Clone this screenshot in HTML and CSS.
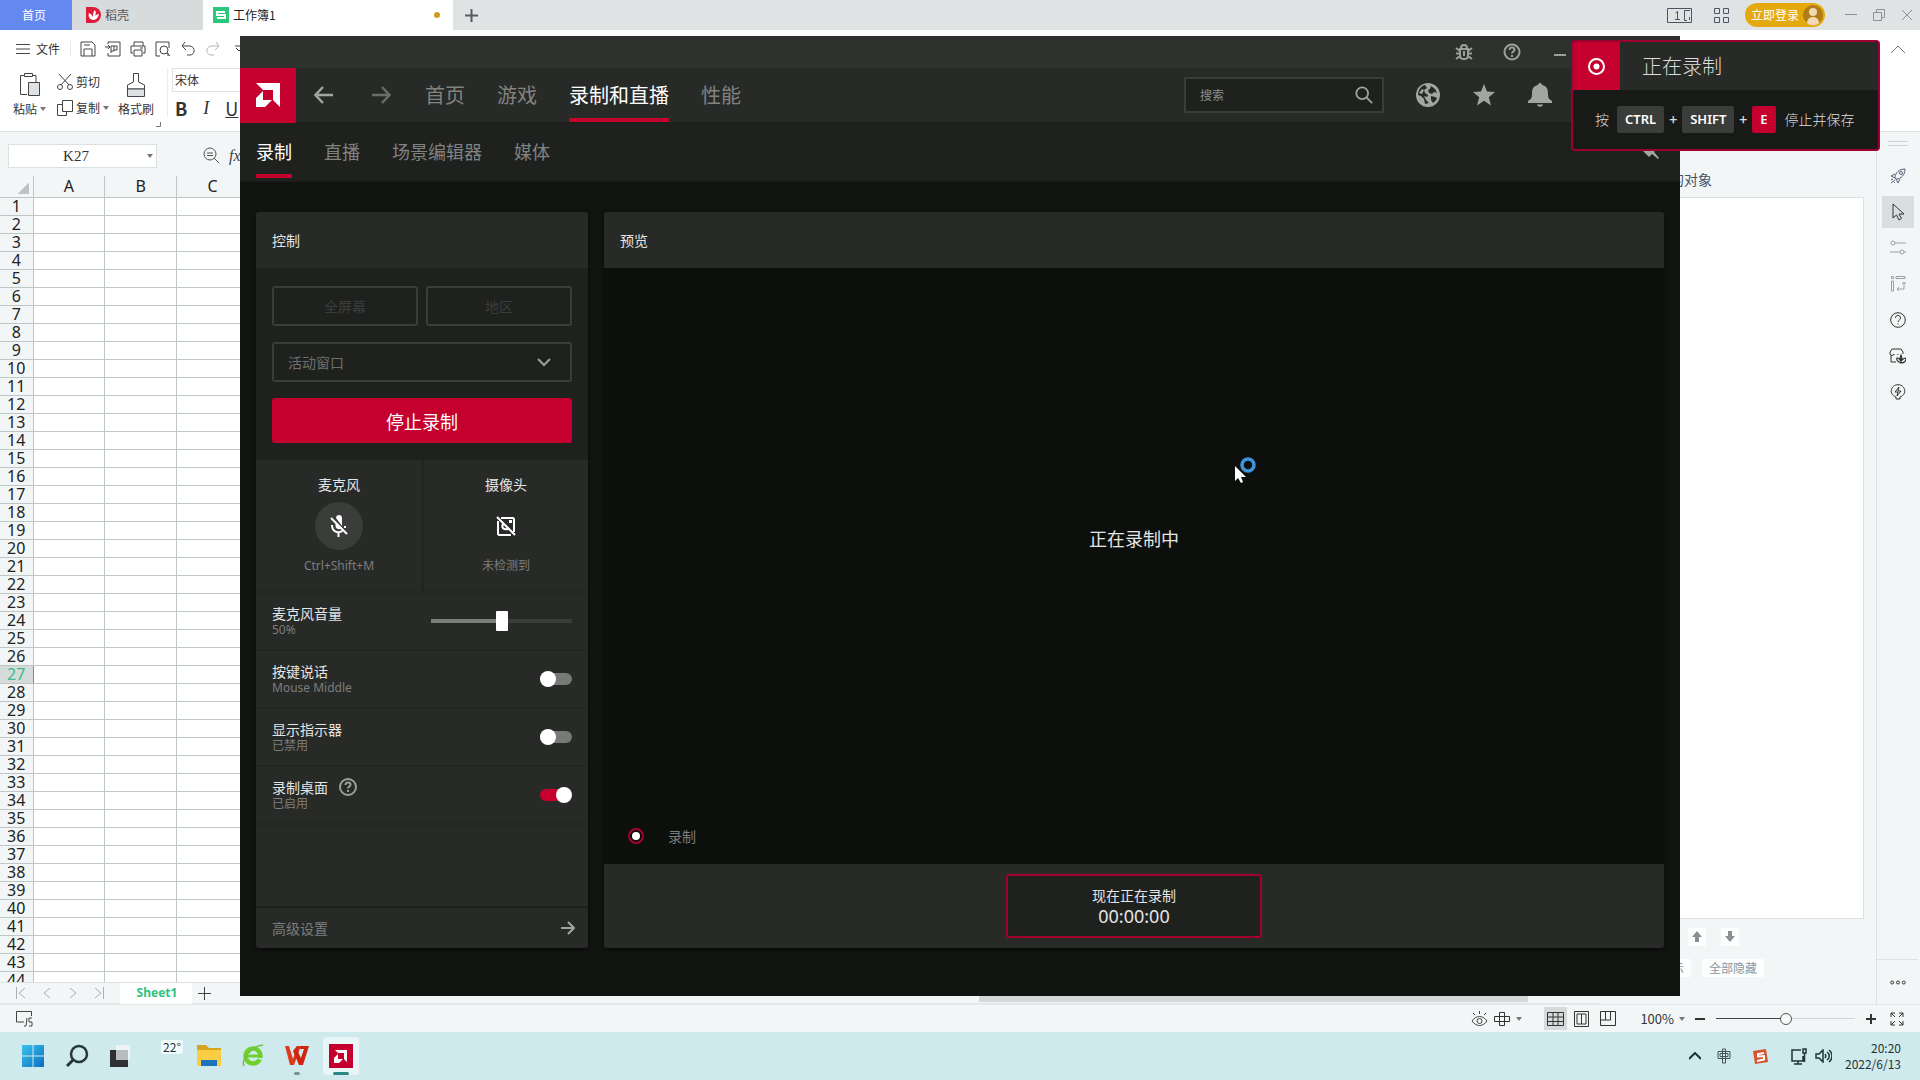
FILE: index.html
```html
<!DOCTYPE html>
<html lang="zh-CN">
<head>
<meta charset="utf-8">
<title>录制和直播</title>
<link rel="stylesheet" href="styles.css">
</head>
<body>
<div class="desktop">
  <div class="wps">
    <header class="tabbar">
      <button class="tab tab-home">首页</button>
      <button class="tab tab-docer"><svg width="15" height="16" viewBox="0 0 15 16"><path d="M0 0h7a8 8 0 0 1 0 16H0z" fill="#dd1c3c"/><path d="M7 13C3 12 2 9 3 6c2 1 3 2 4 4 0-3 0-5 2-7 1 2 1 4 0 6 1-1 2-2 4-2-1 4-3 6-6 6z" fill="#fff"/></svg>稻壳</button>
      <button class="tab tab-book"><svg width="16" height="16" viewBox="0 0 16 16"><rect width="16" height="16" fill="#2bc77a"/><path d="M12 5H4v3h8v3H4" fill="none" stroke="#fff" stroke-width="2"/></svg><span>工作簿1</span><i class="unsaved"></i></button>
      <button class="icon-btn new-tab" aria-label="新建"><svg width="13" height="13" viewBox="0 0 13 13"><path d="M6.500 0v13M0 6.500h13" stroke="#555d62" stroke-width="2"/></svg></button>
      <div class="tabbar-right">
        <svg width="25" height="15" viewBox="0 0 25 15" fill="none" stroke="#4b5563"><path d="M.5.5h24v14H.5zM8.500 5l2-1.500V11M8 11.500h5M23 2.500h-5.500v10H20M22.500 9v3"/></svg>
        <svg width="15" height="15" viewBox="0 0 15 15" fill="none" stroke="#4b5563"><path d="M.5.5h5v5h-5zM9.500.5h5v5h-5zM.5 9.500h5v5h-5zM9.500 9.500h5v5h-5z"/></svg>
        <button class="login">立即登录<svg width="20" height="20" viewBox="0 0 20 20"><circle cx="10" cy="10" r="10" fill="#b07c14"/><circle cx="10" cy="7" r="4" fill="#f0d9b4"/><path d="M4 18c0-8 12-8 12 0-3 3-9 3-12 0z" fill="#f0d9b4"/></svg></button>
        <svg class="win-min" width="12" height="12" viewBox="0 0 12 12" stroke="#8b9195"><path d="M0 5.500h12"/></svg>
        <svg class="win-max" width="12" height="12" viewBox="0 0 12 12" fill="none" stroke="#8b9195"><path d="M.5 3.500h8v8h-8zM3.500 3V.5h8v8H9"/></svg>
        <svg class="win-close" width="12" height="12" viewBox="0 0 12 12" stroke="#8b9195"><path d="M1 1l10 10M11 1L1 11"/></svg>
      </div>
    </header>

    <div class="ribbon">
      <div class="quick">
        <button class="file-menu"><svg width="14" height="10" viewBox="0 0 14 10" stroke="#444"><path d="M0 .5h14M0 5h14M0 9.500h14"/></svg>文件</button>
        <div class="quick-icons">
          <svg width="16" height="16" viewBox="0 0 16 16" fill="none" stroke="#444"><path d="M1 1h11l3 3v11H1zM4 15V8h8v7M4 4h6"/></svg>
          <svg width="16" height="16" viewBox="0 0 16 16" fill="none" stroke="#444"><path d="M3 3V1h12v14H3v-3M0 6h5M3 4l2 2-2 2M6 12V5h3v5H6M9 5h3v4H9"/></svg>
          <svg width="16" height="16" viewBox="0 0 16 16" fill="none" stroke="#444"><path d="M4 5V1h9v4M3 12H1V5h14v7h-2M4 9h8v6H4zM10 7h3"/></svg>
          <svg width="16" height="16" viewBox="0 0 16 16" fill="none" stroke="#444"><path d="M5 15H1V1h13v6M13 12v3"/><circle cx="9" cy="9" r="4"/><path d="M12 12l3 3"/></svg>
          <svg width="16" height="16" viewBox="0 0 16 16" fill="none" stroke="#444"><path d="M5 1L2 5l4 4M2 5h8c6 1 5 9 0 9H7"/></svg>
          <svg width="16" height="16" viewBox="0 0 16 16" fill="none" stroke="#b5b5b5"><path d="M11 1l3 4-4 4M14 5H6C0 6 1 14 6 14h3"/></svg>
          <svg width="16" height="16" viewBox="0 0 16 16" fill="none" stroke="#444"><path d="M5 5h8M6 7l3 3 3-3"/></svg>
        </div>
        <button class="icon-btn collapse" aria-label="收起"><svg width="14" height="8" viewBox="0 0 14 8" fill="none" stroke="#777"><path d="M0 8l7-7 7 7"/></svg></button>
      </div>
      <div class="tools">
        <button class="big-tool"><svg width="22" height="24" viewBox="0 0 22 24" fill="none" stroke="#444"><path d="M8 21.500H1.500v-19H5M14 2.500h3V9"/><path d="M5.500.5h8v3h-8z"/><path d="M9.500 9.500h11v13h-11z" fill="#dfe2e4"/></svg><span>粘贴<i class="caret"></i></span></button>
        <div class="tool-pair">
          <button><svg width="16" height="16" viewBox="0 0 16 16" fill="none" stroke="#444"><path d="M2 0l10 11M14 0L4 11"/><circle cx="3" cy="13" r="2.500"/><circle cx="13" cy="13" r="2.500"/></svg>剪切</button>
          <button><svg width="16" height="16" viewBox="0 0 16 16" fill="none" stroke="#444"><path d="M5.500.5h10v11h-10zM5 4.500H.5v11h9V12"/></svg>复制<i class="caret"></i></button>
        </div>
        <button class="big-tool painter"><svg width="18" height="24" viewBox="0 0 18 24" fill="none" stroke="#444"><path d="M6.500.5h5V9l6 3v4H.5v-4l6-3z"/><path d="M.5 16h17v7.500H.5z" fill="#dfe2e4"/></svg><span>格式刷</span></button>
        <svg class="launcher" width="5" height="5" viewBox="0 0 5 5" fill="none" stroke="#777"><path d="M4.500 0v4.500H0"/></svg>
        <div class="font-tools">
          <div class="font-name">宋体</div>
          <div class="font-style"><b>B</b><em>I</em><u>U</u></div>
        </div>
      </div>
    </div>

    <div class="main">
      <div class="sheet-area">
        <div class="formula">
          <label class="name-box"><input value="K27" aria-label="名称框"><i class="caret"></i></label>
          <svg width="17" height="17" viewBox="0 0 17 17" fill="none" stroke="#555"><circle cx="7" cy="7" r="6"/><path d="M11 11l5 5M4 6h6M4 8.500h6"/></svg>
          <span class="fx">fx</span>
        </div>
        <div class="grid-wrap">
          <table class="cells">
            <thead><tr><th class="corner"></th><th>A</th><th>B</th><th>C</th></tr></thead>
            <tbody id="rows"></tbody>
          </table>
        </div>
        <div class="sheet-tabs">
          <div class="sheet-nav">
            <svg width="10" height="12" viewBox="0 0 10 12"><path d="M.5 0v12M9 1L3 6l6 5"/></svg>
            <svg width="10" height="12" viewBox="0 0 10 12"><path d="M8 1L2 6l6 5"/></svg>
            <svg width="10" height="12" viewBox="0 0 10 12"><path d="M2 1l6 5-6 5"/></svg>
            <svg width="10" height="12" viewBox="0 0 10 12"><path d="M9.500 0v12M1 1l6 5-6 5"/></svg>
          </div>
          <button class="sheet-tab">Sheet1</button>
          <svg width="13" height="13" viewBox="0 0 13 13" stroke="#444"><path d="M6.500 0v13M0 6.500h13"/></svg>
          <div class="hscroll"></div>
        </div>
      </div>
      <aside class="pane">
        <h2>的对象</h2>
        <div class="pane-list"></div>
        <div class="pane-buttons">
          <button aria-label="上移"><svg width="10" height="12" viewBox="0 0 10 12"><path d="M5 0l5 6H7v5H3V6H0z" fill="#8a8f93"/></svg></button>
          <button aria-label="下移"><svg width="10" height="12" viewBox="0 0 10 12"><path d="M5 11l5-6H7V0H3v5H0z" fill="#8a8f93"/></svg></button>
        </div>
        <div class="pane-buttons pane-text"><button>示</button><button>全部隐藏</button></div>
      </aside>
      <nav class="rail">
        <i class="handle"></i>
        <button aria-label="推荐"><svg width="16" height="16" viewBox="0 0 16 16" fill="none" stroke="#59647a"><path d="M5 10C5 5 9 1 15 1c0 6-4 10-9 10zM5 6L1 8l4 2M10 11l-2 4-2-4M1 12l2-1M1 15l4-3M4 15l1-1"/><circle cx="11" cy="5" r="1.500"/></svg></button>
        <button class="on" aria-label="选择"><svg width="16" height="18" viewBox="0 0 16 18" fill="none" stroke="#333"><path d="M3 1v14l3.500-3 2.500 5 2.500-1.500L9 11h5z"/></svg></button>
        <button aria-label="属性"><svg width="16" height="16" viewBox="0 0 16 16" fill="none" stroke="#9aa0a4"><circle cx="3" cy="3" r="2"/><circle cx="12" cy="12" r="2"/><path d="M5 3h11M0 12h10M14 12h2"/></svg></button>
        <button aria-label="布局"><svg width="16" height="16" viewBox="0 0 16 16" fill="none" stroke="#9aa0a4"><path d="M1.500.5h2v2h-2zM6 .5h9v2H6zM1.500 5h2v10h-2zM14 7v6H7M12 8l2-2 2 2M9 11l-2 2 2 2"/></svg></button>
        <button aria-label="帮助"><svg width="16" height="16" viewBox="0 0 16 16" fill="none" stroke="#333"><circle cx="8" cy="8" r="7.300"/><path d="M5.500 6c0-3.500 5-3.500 5 0 0 2-2.500 2-2.500 4M8 11.500v1"/></svg></button>
        <button aria-label="商城"><svg width="17" height="16" viewBox="0 0 17 16" fill="none" stroke="#333"><path d="M2 7v7h5M3 1h9l2 3v2M3 1L1 4v2c1 2 3 2 4 0M5 6v1M9 6v1"/><path d="M12 15c-3-1-5-3-4-5 2 0 2 1 3 2 0-2 0-3 1-5 1 2 1 3 1 5 1-1 2-2 4-2 0 3-2 5-5 5zM12 10v5" stroke-width="1.200"/></svg></button>
        <button aria-label="提示"><svg width="16" height="16" viewBox="0 0 16 16" fill="none" stroke="#333"><path d="M6 13C-2 10 1 .7 8 .7S18 10 10 13v2H6zM9 3L5 8h3l-1 4 4-5H8z"/></svg></button>
        <button class="more" aria-label="更多"><svg width="16" height="5" viewBox="0 0 16 5" fill="none" stroke="#333"><circle cx="2.200" cy="2.500" r="1.500"/><circle cx="8" cy="2.500" r="1.500"/><circle cx="13.800" cy="2.500" r="1.500"/></svg></button>
      </nav>
    </div>

    <footer class="status">
      <svg width="17" height="16" viewBox="0 0 17 16" fill="none" stroke="#444"><path d="M8 11H.5V.5h15V5M10 15l1-8M16 7h-3v4h3v4h-3M8 15h2"/></svg>
      <div class="status-right">
        <svg width="17" height="16" viewBox="0 0 17 16" fill="none" stroke="#444"><path d="M1 10c4-6 11-6 15 0-4 6-11 6-15 0zM8.500 0v3M2 2l2 2M15 2l-2 2"/><circle cx="8.500" cy="10" r="2.500"/></svg>
        <svg class="cross" width="16" height="16" viewBox="0 0 16 16" fill="none" stroke="#333"><path d="M5.500 1.500h5v13h-5zM.5 5.500h15v5H.5z"/></svg>
        <i class="caret"></i>
        <span class="view on"><svg width="17" height="14" viewBox="0 0 17 14" fill="none" stroke="#333"><path d="M.5.5h16v13H.5zM.5 5h16M.5 9.500h16M6 .5v13M11 .5v13"/></svg></span>
        <span class="view"><svg width="15" height="16" viewBox="0 0 15 16" fill="none" stroke="#333"><path d="M.5.5h14v15H.5zM3 3h9v10H3zM7.500 3v10"/></svg></span>
        <span class="view"><svg width="16" height="15" viewBox="0 0 16 15" fill="none" stroke="#333"><path d="M.5.500h15v14H.5zM.5 9h10V.5M5.500 1v8"/></svg></span>
        <span class="zoom-value">100%</span><i class="caret"></i>
        <svg class="zoom-out" width="10" height="10" viewBox="0 0 10 10" stroke="#333" stroke-width="2"><path d="M0 5h10"/></svg>
        <input class="zoom-slider" type="range" aria-label="缩放" value="50">
        <svg class="zoom-in" width="10" height="10" viewBox="0 0 10 10" stroke="#333" stroke-width="2"><path d="M0 5h10M5 0v10"/></svg>
        <svg width="14" height="14" viewBox="0 0 14 14" fill="none" stroke="#333"><path d="M1 5V1h4M9 1h4v4M13 9v4H9M5 13H1V9M1 1l4 4M13 1L9 5M13 13L9 9M1 13l4-4"/></svg>
      </div>
    </footer>
  </div>

  <footer class="taskbar">
    <div class="apps">
      <button aria-label="开始"><svg width="24" height="24" viewBox="0 0 24 24"><defs><linearGradient id="w" x2="1" y2="1"><stop stop-color="#3cc3ee"/><stop offset="1" stop-color="#0a6fc0"/></linearGradient></defs><path d="M1 1h10.500v10.500H1zM12.500 1H23v10.500H12.500zM1 12.500h10.500V23H1zM12.500 12.500H23V23H12.500z" fill="url(#w)"/></svg></button>
      <button aria-label="搜索"><svg width="24" height="24" viewBox="0 0 24 24" fill="none" stroke="#28363c"><circle cx="14" cy="10" r="8" stroke-width="2.500"/><path d="M8 16l-6 6" stroke-width="3"/></svg></button>
      <button aria-label="任务视图"><svg width="24" height="24" viewBox="0 0 24 24"><path d="M1 6h18v17H1z" fill="#2e3133"/><path d="M7 1h14v15H7z" fill="#eef4f4"/><path d="M7 6h12v10H7z" fill="#b9bcbd"/></svg></button>
      <button class="weather">22°</button>
      <button aria-label="文件"><svg width="26" height="24" viewBox="0 0 26 24"><path d="M1 1h9l3 3h12v18H1z" fill="#d9a520"/><path d="M1 6h24v16H1z" fill="#fbcd45"/><path d="M5 16h16v6H5z" fill="#1d72bd"/></svg></button>
      <button aria-label="浏览器"><svg width="24" height="24" viewBox="0 0 24 24" fill="none"><circle cx="12" cy="12" r="7.500" stroke="#6fd22c" stroke-width="4.500"/><path d="M6 12h14" stroke="#6fd22c" stroke-width="3"/><path d="M15 14h8v3z" fill="#cfeaec"/><path d="M3 22C0 16 10 2 22 1" stroke="#74bd4a" stroke-width="1.500"/></svg></button>
      <button class="running" aria-label="WPS"><svg width="26" height="22" viewBox="0 0 26 22"><path d="M1 1h4l4 13 4-13h4L10 20H6z" fill="#e03a1d"/><path d="M16 1h9l-6 19h-4L9 6l4-5h2l-2 4 4 8 3-9h-4z" fill="#cf2411"/></svg></button>
      <button class="running active" aria-label="AMD"><svg width="24" height="24" viewBox="0 0 24 24"><path d="M0 0h24v24H0z" fill="#c5002f"/><path d="M6 6h12v12l-3-3V9H9zM5 14l4-4v5h5l-4 4H5z" fill="#fff"/></svg></button>
    </div>
    <div class="tray">
      <svg width="12" height="8" viewBox="0 0 12 8" fill="none" stroke="#1f3338" stroke-width="2"><path d="M0 7l6-6 6 6"/></svg>
      <svg class="ime" width="14" height="16" viewBox="0 0 14 16" fill="none" stroke="#44555a"><path d="M1 3.500h12v7H1zM3 5.500h8v3H3zM5.500 1h3v14h-3z"/></svg>
      <svg class="sogou" width="17" height="17" viewBox="0 0 17 17"><path d="M1 3l13-2 2 13-13 2z" fill="#d9532f"/><path d="M12 5L6 6v2.500l6-.5v3.500L5 13" fill="none" stroke="#fff" stroke-width="2"/></svg>
      <svg class="net" width="18" height="17" viewBox="0 0 18 17" fill="none" stroke="#1f3338" stroke-width="1.500"><path d="M11 2H2v11h11V8M4 16h8M8 13v3M13 1h3v4h-3zM14.500 5v9"/></svg>
      <svg width="17" height="14" viewBox="0 0 17 14" fill="none" stroke="#1f3338" stroke-width="1.500"><path d="M1 5h3l4-4v12L4 9H1zM10 5c1 1 1 3 0 4M12 3c3 2 3 6 0 8M14 1c4 3 4 9 0 12"/></svg>
      <div class="clock"><span>20:20</span><span>2022/6/13</span></div>
    </div>
  </footer>

  <section class="amd">
    <div class="amd-title">
      <svg width="18" height="18" viewBox="0 0 18 18" fill="none" stroke="#9c9e9c" stroke-width="2"><path d="M5 6h8v7c0 4-8 4-8 0zM6 5c0-4 6-4 6 0M1 5l4 3M17 5l-4 3M1 10.500h4M13 10.500h4M1 16l4-3M17 16l-4-3M9 8v5"/></svg>
      <svg width="18" height="18" viewBox="0 0 18 18" fill="none" stroke="#9c9e9c" stroke-width="2"><circle cx="9" cy="9" r="7.500"/><path d="M6.500 7c0-3.500 5-3 5-.3C11.500 8.500 9 8.500 9 10.500M9 12v2"/></svg>
      <svg width="18" height="18" viewBox="0 0 18 18" stroke="#9c9e9c" stroke-width="2"><path d="M3 12h12"/></svg>
    </div>
    <div class="amd-nav">
      <div class="logo"><svg width="24" height="24" viewBox="0 0 24 24"><path d="M0 0h24v24l-7-7V7H7zM0 15l7-7v9h9l-7 7H0z" fill="#fff"/></svg></div>
      <button class="icon-btn arrow" aria-label="后退"><svg width="20" height="18" viewBox="0 0 20 18" fill="none" stroke="#a3a5a3" stroke-width="2.500"><path d="M19 9H2M9 1L1.500 9 9 17"/></svg></button>
      <button class="icon-btn arrow" aria-label="前进"><svg width="20" height="18" viewBox="0 0 20 18" fill="none" stroke="#6b6d6b" stroke-width="2.500"><path d="M1 9h17M11 1l7.500 8L11 17"/></svg></button>
      <nav class="links">
        <a href="#">首页</a><a href="#">游戏</a><a href="#" class="current">录制和直播</a><a href="#">性能</a>
      </nav>
      <label class="search"><input placeholder="搜索" aria-label="搜索"><svg width="18" height="18" viewBox="0 0 20 20" fill="none" stroke="#a0a2a0" stroke-width="2"><circle cx="8" cy="8" r="6.500"/><path d="M13 13l6 6"/></svg></label>
      <div class="nav-icons">
        <svg width="24" height="24" viewBox="0 0 24 24"><circle cx="12" cy="12" r="12" fill="#a3a5a3"/><path d="M9 2l2 3-3 2 1 3 3 2-1 2-3-1 2 4 3 3-4 1-1-5-3-3-3-1c0-5 3-9 7-10zM15 3l4 3 2 4-3-1-2 2-3-1-1-3 2-1zM15 13l4 1 2 1c-1 3-3 4-4 5l-2-3z" fill="#282a28"/><path d="M6 6l2 1-2 4-3-1z" fill="#a3a5a3"/></svg>
        <svg width="24" height="24" viewBox="0 0 24 24"><path d="M12 1l3 7.500 8 .5-6.200 5.200 2.200 8.300-7-4.700-7 4.700 2.200-8.300L1 9l8-.5z" fill="#a3a5a3"/></svg>
        <svg width="24" height="24" viewBox="0 0 24 24"><path d="M12 0c1.500 0 2 1 2 2 5 1 6 4 6 9 0 4 1 5 4 7v2H0v-2c3-2 4-3 4-7 0-5 1-8 6-9 0-1 .5-2 2-2zM9 21.500h6c-.5 3-5.500 3-6 0z" fill="#a3a5a3"/></svg>
      </div>
    </div>
    <nav class="links amd-subnav">
      <a href="#" class="current">录制</a><a href="#">直播</a><a href="#">场景编辑器</a><a href="#">媒体</a>
      <svg class="pin" width="18" height="18" viewBox="0 0 18 18"><path d="M1 9h9l2-6 3 1-3 6 5 6-1 1-6-5-3 3z" fill="#a3a5a3"/></svg>
    </nav>
    <div class="amd-body">
      <div class="panel controls">
        <h2>控制</h2>
        <div class="targets">
          <div class="pair"><button class="outline" disabled>全屏幕</button><button class="outline" disabled>地区</button></div>
          <div class="select-wrap"><select aria-label="窗口"><option>活动窗口</option></select><svg width="14" height="9" viewBox="0 0 14 9" fill="none" stroke="#9c9e9c" stroke-width="2"><path d="M1 1l6 6 6-6"/></svg></div>
          <button class="stop">停止录制</button>
        </div>
        <div class="devices">
          <div class="device"><span>麦克风</span><button class="round" aria-label="麦克风"><svg width="24" height="24" viewBox="0 0 24 24" fill="none" stroke="#fff" stroke-width="2"><path d="M5 11c0 9 9 8 11 5M18 12v2M11.500 18v5"/><path d="M9 4c0-4 6-4 6 0v8z" fill="#fff" stroke="none"/><path d="M8.500 8l6 6.500c-3 2-6 0-6-3z" fill="#fff" stroke="none"/><path d="M4 4l16 16"/></svg></button><small>Ctrl+Shift+M</small></div>
          <div class="device"><span>摄像头</span><button class="round plain" aria-label="摄像头"><svg width="24" height="24" viewBox="0 0 24 24" fill="none" stroke="#fff" stroke-width="2"><path d="M7 4h12l1 1v13M17 21H5l-1-1V7M3 3l18 18M9 10c-2 4 1 6 5 5"/><path d="M15 6h3v3h-3z" fill="#fff" stroke="none"/></svg></button><small>未检测到</small></div>
        </div>
        <div class="setting"><label for="vol">麦克风音量<small>50%</small></label><input id="vol" class="volume" type="range" value="50"></div>
        <div class="setting"><label for="ptt">按键说话<small>Mouse Middle</small></label><input id="ptt" class="switch" type="checkbox"></div>
        <div class="setting"><label for="ind">显示指示器<small>已禁用</small></label><input id="ind" class="switch" type="checkbox"></div>
        <div class="setting"><label for="desk"><span class="with-help">录制桌面<svg width="18" height="18" viewBox="0 0 18 18" fill="none" stroke="#9c9e9c" stroke-width="2"><circle cx="9" cy="9" r="8"/><path d="M6.500 7c0-3.500 5-3 5-.3C11.500 8.500 9 8.500 9 10.500M9 12v2"/></svg></span><small>已启用</small></label><input id="desk" class="switch" type="checkbox" checked></div>
        <a href="#" class="advanced">高级设置<svg width="14" height="14" viewBox="0 0 14 14" fill="none" stroke="#a3a5a3" stroke-width="2"><path d="M0 7h12M7 1l6 6-6 6"/></svg></a>
      </div>
      <div class="panel preview">
        <h2>预览</h2>
        <div class="stage">
          <p class="message">正在录制中</p>
          <div class="rec-state"><svg width="16" height="16" viewBox="0 0 16 16"><circle cx="8" cy="8" r="7" fill="none" stroke="#a30030" stroke-width="2"/><circle cx="8" cy="8" r="4" fill="#fff"/></svg>录制</div>
        </div>
        <div class="preview-foot"><div class="timer"><span>现在正在录制</span><strong>00:00:00</strong></div></div>
      </div>
    </div>
  </section>

  <aside class="toast">
    <div class="toast-head">
      <div class="toast-icon"><svg width="17" height="17" viewBox="0 0 17 17"><circle cx="8.500" cy="8.500" r="7.500" fill="none" stroke="#fff" stroke-width="2"/><circle cx="8.500" cy="8.500" r="3" fill="#fff"/></svg></div>
      <span>正在录制</span>
    </div>
    <div class="toast-body"><span>按</span><kbd>CTRL</kbd><b>+</b><kbd>SHIFT</kbd><b>+</b><kbd class="hot">E</kbd><span class="tail">停止并保存</span></div>
  </aside>

  <svg class="pointer" width="24" height="28" viewBox="0 0 24 28"><circle cx="14" cy="8" r="6" fill="none" stroke="#3e95dc" stroke-width="3.500"/><path d="M1 9v15l3-3 3 5 2-1-2-5h5z" fill="#fff"/></svg>
</div>
<script src="rows.js"></script>
</body>
</html>
```
FILE: rows.js
```js
const body = document.getElementById('rows');
for (let n = 1; n <= 44; n++) {
  const row = body.insertRow();
  const head = document.createElement('th');
  head.textContent = n;
  if (n === 27) head.className = 'selected';
  row.append(head);
  for (let c = 0; c < 3; c++) row.insertCell();
}
```
FILE: styles.css
```css
* { box-sizing: border-box; }
body { margin: 0; font: 12px/16px "Noto Sans CJK SC", "Noto Sans", sans-serif; color: #333; }
button, input, select { font: inherit; color: inherit; border: 0; padding: 0; margin: 0; background: none; }
h2, p { margin: 0; font-weight: 400; }
svg { display: block; flex: none; }
a { color: inherit; text-decoration: none; }
small { font: 12px/16px "Noto Sans", "Noto Sans CJK SC", sans-serif; }

.desktop { position: relative; height: 100vh; display: flex; flex-direction: column; overflow: hidden; }
.wps { flex: 1; min-height: 0; display: flex; flex-direction: column; background: #f3f6f6; }
.caret { display: inline-block; border: 3px solid transparent; border-top: 4px solid #777; border-bottom: 0; }
.icon-btn { display: flex; align-items: center; justify-content: center; }

.tabbar { height: 30px; display: flex; background: #dfe3e3; }
.tab { display: flex; align-items: center; gap: 4px; }
.tab-home { width: 72px; padding-left: 22px; background: #6389f0; color: #fff; }
.tab-docer { width: 131px; padding-left: 14px; background: #d8dbdb; color: #555; }
.tab-book { width: 250px; padding: 0 13px 0 10px; background: #fff; color: #222; }
.unsaved { width: 6px; height: 6px; margin-left: auto; border-radius: 50%; background: #d29b1c; }
.new-tab { width: 36px; }
.tabbar-right { margin-left: auto; padding-right: 7px; display: flex; align-items: center; gap: 16px; }
.tabbar-right > svg:nth-child(2) { margin-left: 6px; }
.login { height: 24px; padding: 0 2px 0 6px; display: flex; align-items: center; gap: 4px; border-radius: 12px; background: #e5a910; color: #fff; }
.win-min { margin-left: 4px; }

.ribbon { height: 102px; background: #fff; border-bottom: 1px solid #dbe0e0; }
.quick { height: 38px; display: flex; align-items: center; padding: 0 15px 0 16px; }
.file-menu { display: flex; align-items: center; gap: 6px; padding-right: 10px; border-right: 1px solid #e5e8e8; }
.quick-icons { display: flex; gap: 9px; margin-left: 9px; }
.collapse { margin-left: auto; }
.tools { display: flex; align-items: flex-start; padding-left: 13px; }
.big-tool { display: flex; flex-direction: column; align-items: center; gap: 4px; padding-top: 5px; }
.big-tool span, .tool-pair button { display: flex; align-items: center; gap: 3px; }
.tool-pair { display: grid; gap: 10px; margin: 6px 0 0 11px; }
.painter { margin-left: 9px; padding-right: 2px; height: 60px; }
.launcher { margin-top: 54px; }
.font-tools { margin-left: 6px; padding-left: 4px; border-left: 1px solid #eceeee; }
.font-name { width: 90px; height: 24px; padding: 3px 2px; border: 1px solid #dfe2e2; }
.font-style { display: flex; gap: 16px; margin: 7px 0 0 3px; font-size: 18px; line-height: 18px; }
.font-style em { font-family: "Liberation Serif", serif; }

.main { flex: 1; min-height: 0; display: flex; }
.sheet-area { flex: 1; min-width: 0; display: flex; flex-direction: column; }
.formula { height: 44px; display: flex; align-items: center; padding: 3px 0 0 8px; }
.name-box { display: flex; align-items: center; width: 149px; height: 24px; border: 1px solid #dbe0e0; background: #fff; padding-right: 3px; margin-right: 46px; }
.name-box input { flex: 1; min-width: 0; padding-right: 4px; text-align: center; font: 15px/20px "Liberation Serif", serif; }
.fx { margin-left: 9px; font: italic 16px/20px "Liberation Serif", serif; color: #444; }
.grid-wrap { flex: 1; min-height: 0; overflow: hidden; background: #fff; }
.cells { width: 249px; table-layout: fixed; border-collapse: collapse; font: 16px/17px "Noto Sans", sans-serif; color: #222; }
.cells th, .cells td { height: 18px; padding: 0; border: solid #bfc7c6; border-width: 0 1px 1px 0; font-weight: 400; }
.cells th { background: #f3f6f6; }
.cells thead th { height: 21px; line-height: 20px; }
.cells .corner { width: 33px; background: linear-gradient(135deg, transparent 50%, #bfc3c3 50%) 17px 6px / 12px 12px no-repeat #f3f6f6; }
.cells .selected { background: #d5dada; color: #3dba86; border-right-color: #2fb67c; }
.sheet-tabs { height: 22px; display: flex; align-items: center; border-top: 1px solid #dbe0e0; border-bottom: 1px solid #e2e5e5; }
.sheet-nav { width: 120px; padding-left: 16px; display: flex; gap: 16px; }
.sheet-nav svg { fill: none; stroke: #aaafb2; }
.sheet-tab { width: 72px; height: 21px; margin-right: 6px; padding-left: 2px; background: #fff; color: #2fc27c; font: bold 12px/16px "Noto Sans", sans-serif; }
.hscroll { flex: 1; margin: 12px 72px 0 768px; height: 6px; background: #d5d8d8; }

.pane { width: 277px; display: flex; flex-direction: column; border-right: 1px solid #dde2e2; padding: 37px 12px 27px 60px; color: #44526a; }
.pane h2 { font-size: 14px; line-height: 20px; padding-left: 10px; }
.pane-list { flex: 1; margin-top: 8px; background: #fff; border: 1px solid #dbe0e0; }
.pane-buttons { display: flex; gap: 15px; margin: 9px 0 0 28px; }
.pane-buttons button { width: 18px; height: 18px; display: flex; align-items: center; justify-content: center; background: #fdfefe; }
.pane-text { margin: 13px 0 0 5px; gap: 11px; color: #8c959f; }
.pane-text button { width: auto; padding: 0 7px; }

.rail { width: 43px; display: flex; flex-direction: column; align-items: center; gap: 4px; padding: 9px 2px 11px 0; }
.handle { width: 20px; height: 5px; margin-bottom: 10px; border: solid #ccd1d1; border-width: 1px 0; }
.rail button { width: 32px; height: 32px; display: flex; align-items: center; justify-content: center; }
.rail .on { background: #d9dfdf; }
.rail .more { margin: auto 0 -12px; width: 41px; height: 46px; border-top: 1px solid #dde2e2; }

.status { height: 28px; display: flex; align-items: center; justify-content: space-between; padding: 0 16px; border-top: 1px solid #e6e9e9; }
.status-right { display: flex; align-items: center; }
.cross { margin: 0 6px; }
.status-right > .caret { margin-right: 22px; }
.view { display: flex; align-items: center; justify-content: center; width: 23px; height: 23px; margin-right: 3px; }
.view.on { background: #d5dada; }
.zoom-value { margin: 0 5px 0 18px; font-size: 13px; }
.status-right > .zoom-value + .caret { margin-right: 10px; }
.zoom-slider { appearance: none; width: 139px; height: 12px; margin: 0 11px; background: linear-gradient(to right, #444 50%, #cfd4d4 50%) center / 100% 1px no-repeat; }
.zoom-slider::-webkit-slider-thumb { appearance: none; width: 12px; height: 12px; border: 1px solid #555; border-radius: 50%; background: #f8fafa; }
.zoom-in { margin-right: 14px; }

.taskbar { height: 48px; display: flex; justify-content: space-between; background: #cfeaec; color: #1f3338; }
.apps { display: flex; align-items: center; padding-left: 15px; gap: 8px; }
.apps button { width: 36px; height: 38px; display: flex; align-items: center; justify-content: center; border-radius: 3px; position: relative; }
.apps .active { background: #e8f6f7; }
.running::after { content: ""; position: absolute; bottom: 0; width: 6px; height: 3px; border-radius: 2px; background: #7c9497; }
.apps .active::after { width: 16px; background: #2b8783; }
.apps .weather { width: 22px; height: 14px; margin: -18px 0 0 14px; background: #f1fafa; }
.tray { display: flex; align-items: center; padding-right: 19px; }
.ime { margin-left: 16px; }
.sogou { margin-left: 21px; }
.net { margin: 0 7px 0 21px; }
.clock { width: 69px; display: flex; flex-direction: column; text-align: right; }

.amd { position: absolute; left: 12.5%; right: 12.5%; top: 36px; bottom: 84px; display: flex; flex-direction: column; background: #121412; color: #e4e5e4; font-size: 14px; line-height: 18px; }
.amd-title { height: 32px; display: flex; align-items: center; justify-content: flex-end; gap: 30px; padding-right: 111px; background: #2f312f; }
.amd-nav { height: 55px; display: flex; align-items: center; background: #282a28; border-bottom: 1px solid #1c1e1c; }
.logo { width: 56px; height: 55px; display: flex; align-items: center; justify-content: center; background: #c5002f; }
.arrow { margin: 0 19px 0 18px; }
.arrow + .arrow { margin: 0 34px 0 18px; }
.links { display: flex; align-self: stretch; gap: 32px; font-size: 20px; line-height: 24px; color: #818381; }
.links a { display: flex; align-items: center; padding-top: 4px; border-bottom: 4px solid transparent; }
.links .current { color: #fff; border-bottom-color: #c5002f; }
.search { margin-left: auto; width: 200px; height: 36px; display: flex; align-items: center; padding: 0 9px 0 14px; border: 2px solid #3b3d3b; background: #1f211f; }
.search input { flex: 1; min-width: 0; font-size: 12px; }
.search input::placeholder { color: #8d8f8d; opacity: 1; }
.nav-icons { display: flex; gap: 32px; margin: 0 128px 0 32px; }
.amd-subnav { align-self: auto; height: 59px; padding: 0 20px 3px 16px; background: #1f211f; border-bottom: 1px solid #191a19; font-size: 18px; }
.pin { margin: 19px 0 0 auto; }

.amd-body { flex: 1; min-height: 0; display: flex; gap: 16px; padding: 30px 16px 48px; }
.panel { display: flex; flex-direction: column; border-radius: 3px; overflow: hidden; background: #282a28; box-shadow: 0 2px 4px #0a0b0a; }
.panel h2 { height: 56px; padding: 19px 16px; font-size: 14px; line-height: 18px; }
.controls { width: 332px; }
.targets { display: flex; flex-direction: column; gap: 16px; padding: 18px 16px 17px; background: #1f211f; }
.pair { display: grid; grid-template-columns: 1fr 1fr; gap: 8px; }
.outline, .select-wrap select { height: 40px; border: 2px solid #3b3d3b; border-radius: 3px; }
.outline { color: #3b3d3b; }
.select-wrap { display: grid; align-items: center; }
.select-wrap select { appearance: none; grid-area: 1 / 1; padding: 0 14px; color: #6e706e; }
.select-wrap svg { grid-area: 1 / 1; justify-self: end; margin-right: 21px; }
.stop { height: 45px; border-radius: 3px; background: #c5002f; color: #fff; font-size: 18px; }
.devices { display: grid; grid-template-columns: 1fr 1fr; border-bottom: 2px solid #242624; }
.device { height: 131px; padding-top: 15px; display: flex; flex-direction: column; align-items: center; }
.device + .device { border-left: 2px solid #222422; }
.round { width: 48px; height: 48px; margin: 9px 0 8px; display: flex; align-items: center; justify-content: center; border-radius: 50%; background: #3b3d3b; }
.plain { background: none; }
.device small, .setting small { color: #7c7e7c; }
.setting { height: 58px; padding: 0 16px; display: flex; align-items: center; justify-content: space-between; border-bottom: 2px solid #242624; }
.setting label { display: grid; }
.with-help { display: flex; align-items: center; gap: 11px; }
.volume { appearance: none; width: 141px; height: 20px; background: linear-gradient(to right, #7c7e7c 50%, #3b3d3b 50%) center / 100% 4px no-repeat; }
.volume::-webkit-slider-thumb { appearance: none; width: 12px; height: 20px; border-radius: 1px; background: #fff; }
.switch { appearance: none; width: 32px; height: 12px; display: flex; align-items: center; border-radius: 6px; background: #777977; }
.switch::before { content: ""; flex: none; width: 16px; height: 16px; border-radius: 50%; background: #fff; }
.switch:checked { justify-content: flex-end; background: #c5002f; }
.advanced { margin-top: auto; height: 42px; padding: 0 13px 0 16px; display: flex; align-items: center; justify-content: space-between; border-top: 2px solid #1f211f; color: #7c7e7c; }
.preview { flex: 1; }
.stage { flex: 1; display: flex; flex-direction: column; background: #0d0f0d; }
.message { flex: 1; display: flex; align-items: center; justify-content: center; padding-bottom: 20px; font-size: 18px; }
.rec-state { display: flex; align-items: center; gap: 24px; padding: 0 24px 19px; color: #7c7e7c; }
.preview-foot { height: 84px; display: flex; align-items: center; justify-content: center; }
.timer { width: 256px; height: 64px; display: flex; flex-direction: column; align-items: center; justify-content: center; gap: 2px; border: 2px solid #a30030; border-radius: 3px; background: #1f211f; }
.timer strong { font: 400 18px/20px "Noto Sans", sans-serif; }

.toast { position: absolute; top: 40px; right: 40px; width: 309px; border: 2px solid #9b0030; border-radius: 4px; overflow: hidden; background: #181a18; color: #dcdddc; font-size: 14px; line-height: 18px; }
.toast-head { height: 48px; display: flex; align-items: center; gap: 22px; background: #282a28; font-size: 20px; line-height: 28px; font-weight: 300; }
.toast-icon { align-self: stretch; width: 47px; display: flex; align-items: center; justify-content: center; background: #c5002f; }
.toast-body { height: 59px; display: flex; align-items: center; padding: 0 0 1px 22px; font-weight: 300; }
kbd { height: 27px; padding: 0 8px; border-radius: 2px; background: #3b3d3b; color: #fff; font: 600 13px/27px "Noto Sans", sans-serif; }
.toast-body b { width: 18px; text-align: center; font-weight: 500; }
.toast-body > span:first-child { margin-right: 8px; }
.hot { background: #c5002f; }
.tail { margin-left: 9px; }
.pointer { position: absolute; left: 1234px; top: 457px; }
```
